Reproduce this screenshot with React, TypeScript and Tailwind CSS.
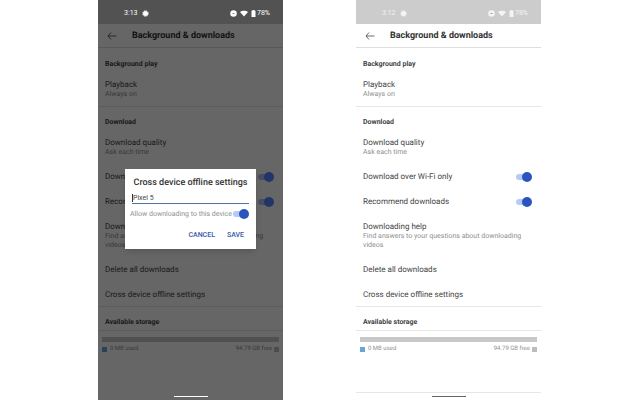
import { useState } from 'react'
import type { ReactNode } from 'react'

function Toggle({ id, dimmed }: { id: string; dimmed?: boolean }) {
  const [on, setOn] = useState(true)
  return (
    <input
      id={id}
      type="checkbox"
      role="switch"
      checked={on}
      onChange={e => setOn(e.target.checked)}
      className={`relative h-[10px] w-4 shrink-0 appearance-none before:absolute before:top-[2px] before:left-0 before:h-[6px] before:w-3 before:rounded-full after:absolute after:top-0 after:left-0 after:size-[10px] after:rounded-full after:bg-[#8a8a8a] checked:after:left-[6px] ${
        dimmed ? 'before:bg-[#b5bff7] checked:after:bg-[#5585ff]' : 'before:bg-[#b5cbf7] checked:after:bg-[#2b55bd]'
      }`}
    />
  )
}

function StatusBar({ time, faded }: { time: string; faded?: boolean }) {
  return (
    <div className={`flex h-6 items-center pt-[2px] pr-[13px] pl-[26px] text-[7px] text-white ${faded ? 'opacity-80' : ''}`}>
      <span>{time}</span>
      <svg className="ml-1 size-[7px]" viewBox="0 0 14 14">
        <circle cx="7" cy="7" r="5" fill="currentColor" />
        <circle cx="7" cy="7" r="5.500" fill="none" stroke="currentColor" strokeWidth="2" strokeDasharray="2.6 1.720" />
      </svg>
      <svg className="mr-[3px] ml-auto size-[7px]" viewBox="0 0 14 14">
        <circle cx="7" cy="7" r="6.5" fill="currentColor" />
        <path d="M4.500 7h5" stroke="#888" strokeWidth="1.5" />
      </svg>
      <svg className="mr-[3px] h-[7px] w-2" viewBox="0 0 16 14" fill="currentColor">
        <path d="M0 4C4 .5 12 .5 16 4L8 13z" />
      </svg>
      <svg className="mr-px h-[7px] w-[5px]" viewBox="0 0 10 14" fill="currentColor">
        <path d="M3 0h4v1.500h2V14H1V1.500h2z" />
      </svg>
      <span>78%</span>
    </div>
  )
}

function Heading({ children }: { children: ReactNode }) {
  return <h2 className="px-[7px] pt-[10px] text-[7px] leading-[10px] font-bold text-[#444]">{children}</h2>
}

function Item({ title, note }: { title: string; note?: string }) {
  return (
    <div>
      <div className="text-[8px] leading-[10px] text-[#444]">{title}</div>
      {note && <div className="pr-2 text-[7px] leading-[9px] text-[#8f8f8f]">{note}</div>}
    </div>
  )
}

function SwitchItem({ id, title, dimmed }: { id: string; title: string; dimmed?: boolean }) {
  return (
    <div className="flex items-center justify-between pr-[2px]">
      <label htmlFor={id} className="text-[8px] leading-[10px] text-[#444]">{title}</label>
      <Toggle id={id} dimmed={dimmed} />
    </div>
  )
}

function Settings({ prefix, dimmed }: { prefix: string; dimmed?: boolean }) {
  return (
    <>
      <header className="mb-px flex h-6 items-center border-b border-[#dedede] pl-[9px]">
        <button aria-label="Back" className="mr-[15px]">
          <svg className="h-2 w-[10px]" viewBox="0 0 20 16" fill="none" stroke="#444" strokeWidth="1.6">
            <path d="M19 8H2M8 1L2 8l6 7" />
          </svg>
        </button>
        <h1 className="pt-[3px] text-[9px] font-bold whitespace-nowrap text-[#333]">Background &amp; downloads</h1>
      </header>

      <section className="border-b border-[#e6e6e6]">
        <Heading>Background play</Heading>
        <div className="px-[7px] pt-[11px] pb-[7px]">
          <Item title="Playback" note="Always on" />
        </div>
      </section>

      <section className="border-b border-[#e6e6e6]">
        <Heading>Download</Heading>
        <div className="flex flex-col gap-[15px] px-[7px] pt-[11px] pb-[6px]">
          <Item title="Download quality" note="Ask each time" />
          <SwitchItem id={`${prefix}-wifi`} title="Download over Wi-Fi only" dimmed={dimmed} />
          <SwitchItem id={`${prefix}-recommend`} title="Recommend downloads" dimmed={dimmed} />
          <Item title="Downloading help" note="Find answers to your questions about downloading videos" />
          <Item title="Delete all downloads" />
          <Item title="Cross device offline settings" />
        </div>
      </section>

      <section>
        <div className="border-b border-[#e6e6e6] pb-[3px]">
          <Heading>Available storage</Heading>
        </div>
        <div className="px-1 pt-[6px]">
          <div className="h-[5px] bg-[#c8c8c8]" />
          <div className="flex items-center pt-[3px] text-[6px] leading-[8px] text-[#8f8f8f]">
            <span className="mr-[3px] size-[5px] bg-[#6aa5d8]" />
            0 MB used
            <span className="mr-[2px] ml-auto">94.79 GB free</span>
            <span className="size-[5px] bg-[#bdbdbd]" />
          </div>
        </div>
      </section>
    </>
  )
}

function DeviceDialog() {
  const [name, setName] = useState('Pixel 5')
  return (
    <div role="dialog" aria-labelledby="dialog-title" className="w-[131px] bg-white px-[7px] pt-2 pb-[9px] shadow-md">
      <h2 id="dialog-title" className="text-center text-[9px] leading-3 font-medium whitespace-nowrap text-[#333]">
        Cross device offline settings
      </h2>
      <div className="mt-1 flex h-[11px] items-center border-b border-[#5370a8]">
        <span className="h-2 w-px bg-[#333]" />
        <input
          aria-label="Device name"
          value={name}
          onChange={e => setName(e.target.value)}
          className="w-full text-[7px] leading-[10px] text-[#444] outline-none"
        />
      </div>
      <div className="mt-1 -ml-[2px] flex items-center justify-between">
        <label htmlFor="allow" className="text-[7px] leading-3 whitespace-nowrap text-[#8f8f8f]">
          Allow downloading to this device
        </label>
        <Toggle id="allow" />
      </div>
      <div className="mt-[10px] flex justify-end gap-3 pr-[5px] text-[7px] leading-[10px] font-medium text-[#3559a8]">
        <button>CANCEL</button>
        <button>SAVE</button>
      </div>
    </div>
  )
}

export default function App() {
  return (
    <main className="flex min-h-screen justify-center gap-[73px] bg-white pr-px font-[Roboto,sans-serif] [text-rendering:geometricPrecision]">
      <div className="relative flex w-[185px] flex-col bg-white">
        <div className="bg-[#ccc]">
          <div className="relative z-20">
            <StatusBar time="3:13" />
          </div>
        </div>
        <Settings prefix="left" dimmed />
        <div className="z-20 mt-auto mb-[3px] h-px w-[34px] self-center bg-white" />
        <div className="absolute inset-0 z-10 flex items-center justify-center bg-black/60 pt-[17px]">
          <DeviceDialog />
        </div>
      </div>

      <div className="flex w-[185px] flex-col bg-white">
        <div className="bg-[#ccc]">
          <StatusBar time="3:12" faded />
        </div>
        <Settings prefix="right" />
        <div className="mt-auto flex h-2 items-center justify-center border-t border-[#e6e6e6]">
          <span className="h-px w-[34px] bg-[#666]" />
        </div>
      </div>
    </main>
  )
}
